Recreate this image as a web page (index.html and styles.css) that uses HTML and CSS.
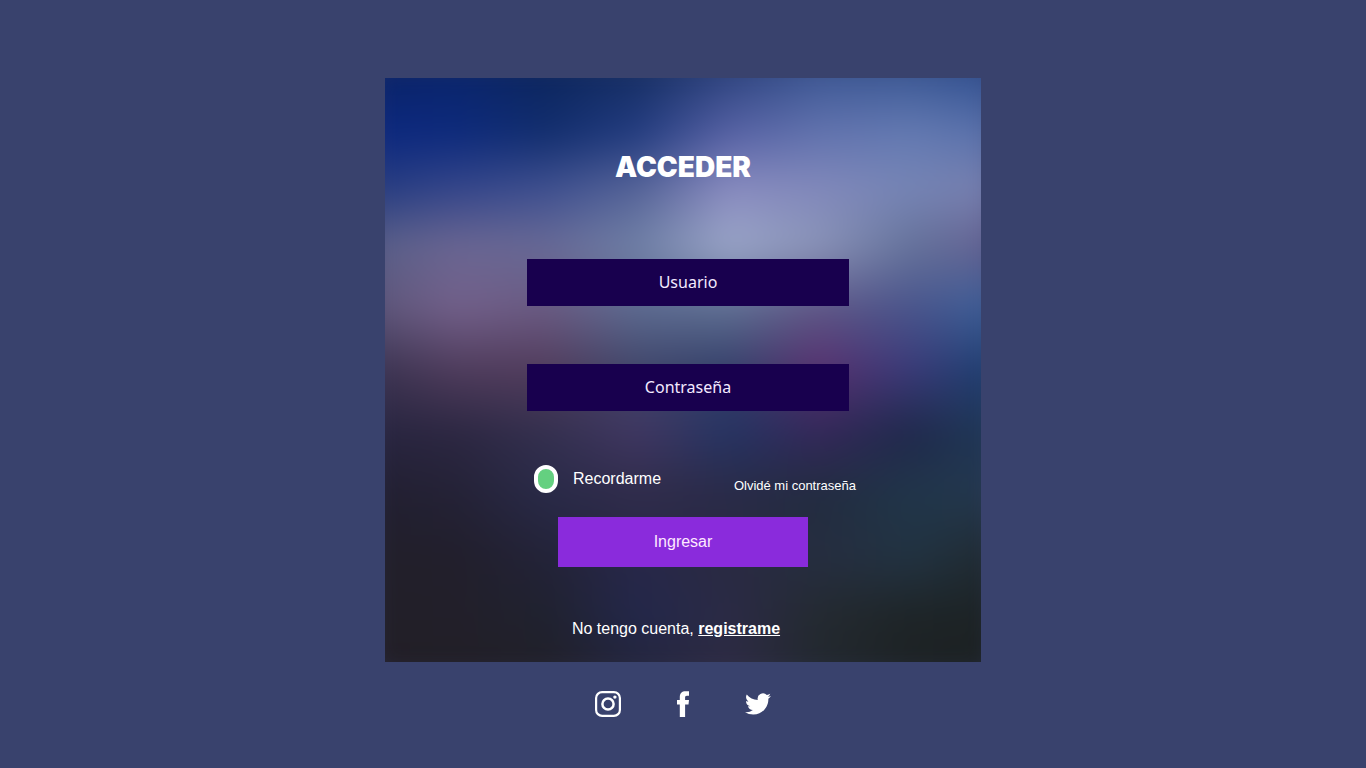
FILE: index.html
```html
<!DOCTYPE html>
<html lang="es">
<head>
<meta charset="utf-8">
<meta name="viewport" content="width=device-width, initial-scale=1">
<title>Acceder</title>
<link rel="stylesheet" href="styles.css">
</head>
<body class="page">
<main class="card">
  <div class="backdrop" aria-hidden="true">
    <i class="band band-0"></i><i class="band band-1"></i><i class="band band-2"></i><i class="band band-3"></i><i class="band band-4"></i><i class="band band-5"></i><i class="band band-6"></i><i class="band band-7"></i><i class="band band-8"></i><i class="band band-9"></i><i class="band band-10"></i>
  </div>
  <h1 class="title">ACCEDER</h1>
  <form class="form">
    <input class="field" type="text" placeholder="Usuario" aria-label="Usuario">
    <input class="field" type="password" placeholder="Contraseña" aria-label="Contraseña">
    <div class="options">
      <input class="check" type="checkbox" id="remember" checked>
      <label class="remember" for="remember">Recordarme</label>
      <a class="forgot" href="#">Olvidé mi contraseña</a>
    </div>
    <button class="submit" type="submit">Ingresar</button>
  </form>
  <p class="signup">No tengo cuenta, <a class="signup-link" href="#">registrame</a></p>
</main>
<footer class="social">
  <a class="social-link" href="#" aria-label="Instagram">
    <svg class="icon" viewBox="0 0 26 26" fill="none" stroke="#fff"><rect x="1.1" y="1.1" width="23.8" height="23.8" rx="6" stroke-width="2.200"/><circle cx="13" cy="13" r="5.600" stroke-width="2.500"/><circle cx="19.900" cy="6.100" r="1.700" fill="#fff" stroke="none"/></svg>
  </a>
  <a class="social-link" href="#" aria-label="Facebook">
    <svg class="icon" viewBox="0 0 26 26" fill="#fff"><path d="M9.800 26V13.400H7V9h2.800V6C9.800 2.200 11.900.2 15.600.2H19V4.800h-2.100c-1.400 0-1.800.7-1.800 1.800V9H19l-.5 4.400h-3.400V26z"/></svg>
  </a>
  <a class="social-link" href="#" aria-label="Twitter">
    <svg class="icon" viewBox="0 0 24 24" fill="#fff"><path d="M23.950 4.570a10 10 0 0 1-2.820.77 4.960 4.960 0 0 0 2.160-2.720c-.95.55-2 .95-3.130 1.180a4.920 4.920 0 0 0-8.380 4.480C7.690 8.090 4.070 6.130 1.640 3.160a4.820 4.820 0 0 0-.67 2.480c0 1.710.87 3.210 2.190 4.100a4.900 4.900 0 0 1-2.230-.62v.06a4.920 4.920 0 0 0 3.950 4.830 5 5 0 0 1-2.210.08 4.940 4.940 0 0 0 4.600 3.420A9.870 9.870 0 0 1 0 19.540a13.990 13.990 0 0 0 7.550 2.210c9.050 0 14-7.500 14-13.980 0-.21 0-.42-.02-.63a9.940 9.940 0 0 0 2.420-2.570z"/></svg>
  </a>
</footer>
</body>
</html>
```
FILE: styles.css
```css
* { box-sizing: border-box; }

.page {
  margin: 0;
  min-height: 100vh;
  padding: 78px 16px 24px;
  display: flex;
  flex-direction: column;
  align-items: center;
  background: #39426d;
  color: #fff;
  font: 16px/24px "Liberation Sans", Arial, sans-serif;
}

.card {
  position: relative;
  width: 100%;
  max-width: 596px;
  padding: 72px 16px 21px;
  display: flex;
  flex-direction: column;
  align-items: center;
  overflow: hidden;
  isolation: isolate;
}

/* Colour mesh: each band fades in over the one above it. */
.backdrop {
  position: absolute;
  inset: -20px;
  z-index: -1;
  filter: blur(15px);
}

.band {
  position: absolute;
  inset: 0;
  -webkit-mask-image: linear-gradient(transparent var(--from), #000 var(--to));
  mask-image: linear-gradient(transparent var(--from), #000 var(--to));
}

.band-0 { --from: -10%; --to: 0%; background: linear-gradient(90deg, #0a2262, #0a2468, #0b245a, #142c5e, #263e78, #36528f, #34528f, #27488a); }
.band-1 { --from: 0%; --to: 12%; background: linear-gradient(90deg, #0c2880, #0d2a7c, #122e6e, #233c80, #5661a4, #6273ae, #647ab2, #5870aa); }
.band-2 { --from: 12%; --to: 21%; background: linear-gradient(90deg, #263c80, #35468a, #3f5090, #566498, #8a8cc0, #8289bb, #7685b5, #787fae); }
.band-3 { --from: 21%; --to: 30%; background: linear-gradient(90deg, #585f88, #6a6692, #686a96, #7080a6, #9ba6c8, #8a94b8, #66739b, #645f90); }
.band-4 { --from: 30%; --to: 40%; background: linear-gradient(90deg, #5c5578, #73608a, #6a5a82, #5c6a90, #5e6e92, #5e5686, #4a558c, #3a609a); }
.band-5 { --from: 40%; --to: 50%; background: linear-gradient(90deg, #3a3350, #4f3c5c, #523c5c, #40466a, #34406a, #58306f, #3a3a78, #1a4070); }
.band-6 { --from: 50%; --to: 60%; background: linear-gradient(90deg, #282540, #2c2742, #34304f, #403762, #263463, #34285a, #20294c, #1f3a58); }
.band-7 { --from: 60%; --to: 70%; background: linear-gradient(90deg, #221f30, #242236, #292a48, #302c4a, #2a2b48, #222c40, #21364a, #25384f); }
.band-8 { --from: 70%; --to: 80%; background: linear-gradient(90deg, #22202a, #221f2c, #232338, #28284a, #2a2a42, #262e40, #223342, #202a30); }
.band-9 { --from: 80%; --to: 90%; background: linear-gradient(90deg, #221f28, #22202a, #20222f, #23274a, #2b2b46, #242a30, #1e2426, #1c2224); }
.band-10 { --from: 90%; --to: 100%; background: linear-gradient(90deg, #231f26, #221f26, #222028, #25263a, #2f2b42, #222830, #1e2326, #1c2122); }

.title {
  margin: 0 0 75px;
  font: 900 28px/34px Inter, "Liberation Sans", sans-serif;
}

.form {
  width: 100%;
  max-width: 312px;
  display: flex;
  flex-direction: column;
  align-items: center;
}

.field {
  width: 322px;
  max-width: 100vw;
  height: 47px;
  margin: 0 0 58px 10px;
  padding: 0 12px 2px;
  border: 0;
  border-radius: 0;
  background: #18004e;
  color: #fff;
  font: 16px/24px "Noto Sans", sans-serif;
  text-align: center;
}

.field::placeholder { color: #f3eaff; opacity: 1; }
.field:nth-of-type(2) { margin-bottom: 54px; }

.options {
  width: 322px;
  height: 28px;
  margin: 0 0 24px 24px;
  display: flex;
  align-items: center;
}

.check {
  appearance: none;
  width: 24px;
  height: 28px;
  margin: 0 15px 0 0;
  border: solid #fff;
  border-width: 4px;
  border-radius: 12px;
  background: #64d080;
}

.forgot {
  align-self: flex-end;
  margin-left: auto;
  color: #fff;
  font-size: 13px;
  line-height: 14px;
  text-decoration: none;
}

.submit {
  width: 250px;
  height: 50px;
  padding: 0;
  border: 0;
  background: #8a2bdc;
  color: #ffe9ff;
  font: 16px/24px "Liberation Sans", Arial, sans-serif;
}

.signup {
  margin: 50px 0 0;
  padding-right: 14px;
}

.signup-link {
  color: #fff;
  font-weight: 700;
}

.social {
  margin-top: 29px;
  display: flex;
  gap: 49px;
}

.social-link, .icon {
  display: block;
  width: 26px;
  height: 26px;
}
```
